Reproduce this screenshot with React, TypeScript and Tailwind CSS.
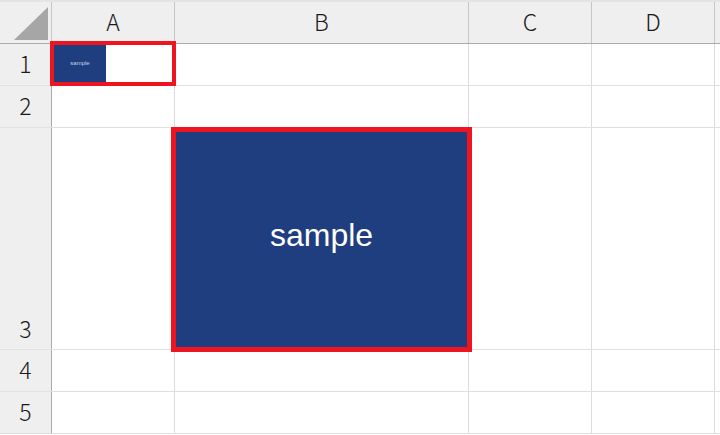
import React from "react";

const COLS = [
  { label: "A", w: "w-[123px]" },
  { label: "B", w: "w-[294px]" },
  { label: "C", w: "w-[123px]" },
  { label: "D", w: "w-[123px]" },
];

const ROWS = [
  { label: "1", h: "h-[42px]" },
  { label: "2", h: "h-[42px]" },
  { label: "3", h: "h-[222px]" },
  { label: "4", h: "h-[42px]" },
  { label: "5", h: "h-[42px]" },
];

const headFont = { fontFamily: '"Noto Sans CJK JP", "DejaVu Sans", sans-serif' };

export default function App() {
  return (
    <div className="relative w-[720px] h-[435px] overflow-hidden bg-white">
      {/* Column headers */}
      <div className="flex h-[44px] bg-[#efefef] border-t-2 border-t-[#e4e4e4] border-b border-b-[#ababab]">
        <div className="w-[52px] shrink-0 border-r border-r-[#c6c6c6] relative">
          <svg className="absolute left-0 top-0" width="52" height="42" viewBox="0 0 52 42">
            <polygon points="14,38 48,38 48,5" fill="#a6a6a6" />
          </svg>
        </div>
        {COLS.map((c) => (
          <div
            key={c.label}
            className={`${c.w} shrink-0 border-r border-r-[#c6c6c6] flex items-center justify-center text-[23px] font-light text-[#1a1a1a] pb-[2px]`}
            style={headFont}
          >
            {c.label}
          </div>
        ))}
        <div className="flex-1" />
      </div>

      {/* Rows */}
      {ROWS.map((r) => (
        <div key={r.label} className={`flex ${r.h} border-b border-b-[#e0e0e0]`}>
          <div
            className={`w-[52px] shrink-0 bg-[#efefef] border-r border-r-[#ababab] flex justify-center text-[23px] font-light text-[#1a1a1a] ${
              r.label === "3" ? "items-end pb-[4px]" : "items-center pb-[2px]"
            }`}
            style={headFont}
          >
            {r.label}
          </div>
          {COLS.map((c) => (
            <div key={c.label} className={`${c.w} shrink-0 border-r border-r-[#dcdcdc]`} />
          ))}
          <div className="flex-1" />
        </div>
      ))}

      {/* Small shape in A1 */}
      <div className="absolute left-[50px] top-[41px] w-[126px] h-[45px] border-4 border-[#ee1520] bg-white flex">
        <div className="w-[52px] h-full bg-[#1f3e7f] flex items-center justify-center">
          <span className="text-[6px] text-[#c9d3e6]" style={{ fontFamily: '"Liberation Sans", Arial, sans-serif' }}>
            sample
          </span>
        </div>
      </div>

      {/* Large shape over B3 */}
      <div className="absolute left-[171px] top-[127px] w-[301px] h-[225px] border-[5px] border-[#ee1520] bg-[#1f3e7f] flex items-center justify-center pb-[10px]">
        <span className="text-[32px] text-white" style={{ fontFamily: '"Liberation Sans", Arial, sans-serif' }}>
          sample
        </span>
      </div>
    </div>
  );
}
